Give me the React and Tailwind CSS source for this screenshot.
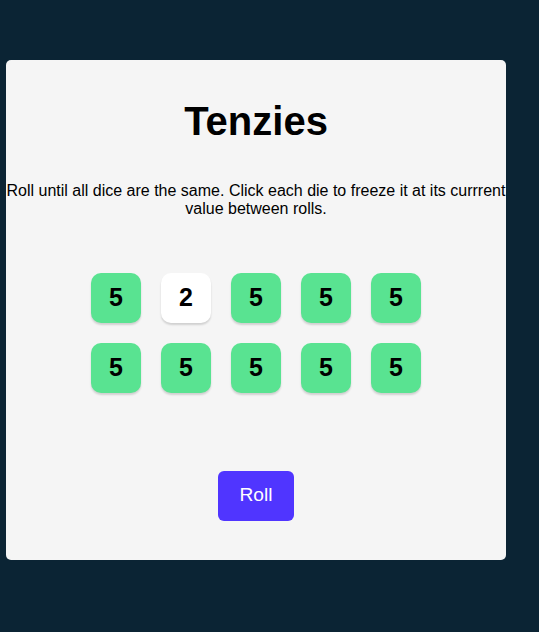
import { useState } from "react";

function Die({ value, held, onClick }) {
  return (
    <button
      onClick={onClick}
      className={`w-[50px] h-[50px] rounded-[10px] shadow-[0_2px_2px_rgba(0,0,0,0.15)] flex items-center justify-center text-[25px] font-bold text-black cursor-pointer ${
        held ? "bg-[#59e391]" : "bg-white"
      }`}>
      {value}
    </button>
  );
}

export default function App() {
  const [dice, setDice] = useState([
    { value: 5, held: true },
    { value: 2, held: false },
    { value: 5, held: true },
    { value: 5, held: true },
    { value: 5, held: true },
    { value: 5, held: true },
    { value: 5, held: true },
    { value: 5, held: true },
    { value: 5, held: true },
    { value: 5, held: true },
  ]);

  function hold(index) {
    setDice((prev) =>
      prev.map((die, i) => (i === index ? { ...die, held: !die.held } : die))
    );
  }

  function roll() {
    setDice((prev) =>
      prev.map((die) =>
        die.held ? die : { ...die, value: Math.ceil(Math.random() * 6) }
      )
    );
  }

  return (
    <div className="min-h-screen bg-[#0b2434] pt-[60px] pl-[6px] font-['Liberation_Sans',Arial,sans-serif]">
      <main className="w-[500px] h-[500px] bg-[#f5f5f5] rounded-[5px] flex flex-col items-center text-black">
        <h1 className="mt-[38px] text-[40px] leading-[46px] font-bold">
          Tenzies
        </h1>
        <p className="mt-[38px] w-full text-center text-[16px] leading-[18.4px]">
          Roll until all dice are the same. Click each die to freeze it at its
          currrent value between rolls.
        </p>
        <div className="mt-[54px] grid grid-cols-5 gap-[20px]">
          {dice.map((die, i) => (
            <Die
              key={i}
              value={die.value}
              held={die.held}
              onClick={() => hold(i)}
            />
          ))}
        </div>
        <button
          onClick={roll}
          className="mt-[78px] w-[76px] h-[50px] rounded-[6px] bg-[#5035ff] text-white text-[19.2px] cursor-pointer">
          Roll
        </button>
      </main>
    </div>
  );
}
